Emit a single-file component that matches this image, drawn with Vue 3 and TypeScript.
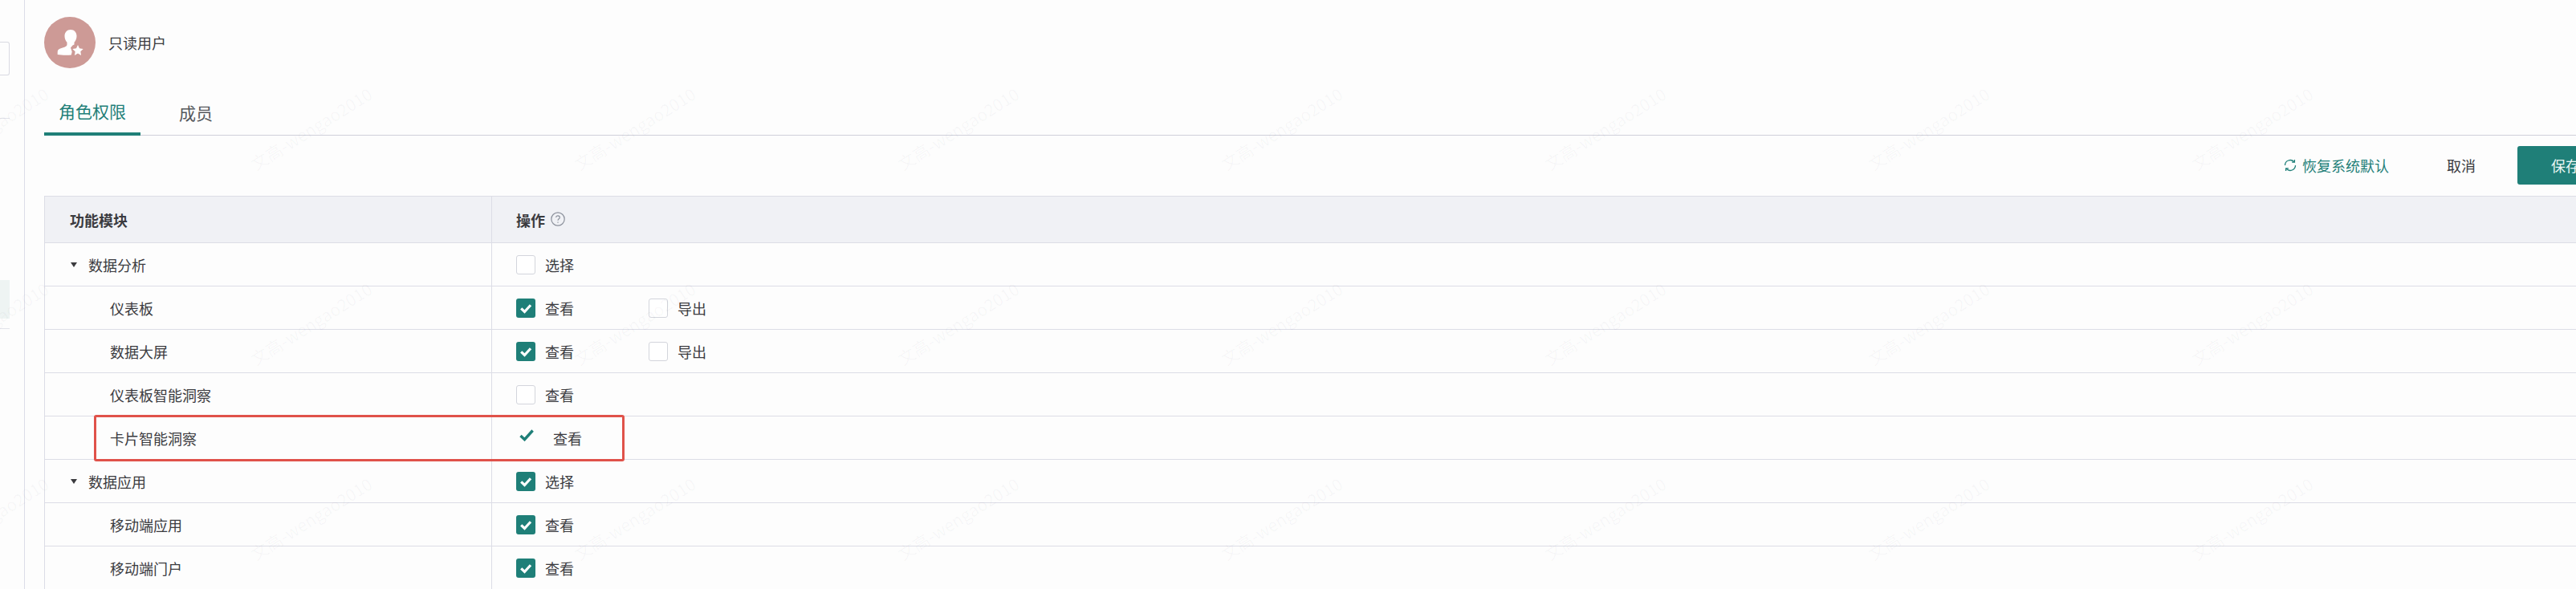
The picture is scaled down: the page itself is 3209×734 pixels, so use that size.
<script setup lang="ts">
type Perm = { label: string; checked?: boolean; bare?: boolean }
type Row = { name: string; group?: boolean; perms: Perm[] }

const rows: Row[] = [
  { name: '数据分析', group: true, perms: [{ label: '选择' }] },
  { name: '仪表板', perms: [{ label: '查看', checked: true }, { label: '导出' }] },
  { name: '数据大屏', perms: [{ label: '查看', checked: true }, { label: '导出' }] },
  { name: '仪表板智能洞察', perms: [{ label: '查看' }] },
  { name: '卡片智能洞察', perms: [{ label: '查看', bare: true }] },
  { name: '数据应用', group: true, perms: [{ label: '选择', checked: true }] },
  { name: '移动端应用', perms: [{ label: '查看', checked: true }] },
  { name: '移动端门户', perms: [{ label: '查看', checked: true }] },
]

const WATERMARKS = 24
</script>

<template>
  <div class="page">
    <aside class="side">
      <div class="side-input"></div>
      <div class="side-line first"></div>
      <div class="side-active"></div>
      <div class="side-line second"></div>
    </aside>

    <main class="main">
      <div class="role">
        <div class="avatar">
          <svg width="64" height="64" viewBox="0 0 64 64" fill="#fff">
            <path d="M33 16c-4.500 0-7.500 3.400-7.500 8 0 3.200 1.200 5.800 3 7.800v3c0 1.200-1 2-2.500 2.600L20 39.600c-2 .8-3.300 2-3.300 4.400v3c5 .9 12 1 17 .5l1-4L33 38.500 35.500 35.500 37.500 34.500V31.800c1.800-2 3-4.600 3-7.800 0-4.600-3-8-7.500-8z" />
            <path d="M42 35l2 4.300 4.700.6-3.400 3.300.8 4.700-4.100-2.300-4.100 2.300.8-4.700-3.400-3.300 4.700-.6z" />
          </svg>
        </div>
        <span class="role-name">只读用户</span>
      </div>

      <div class="tabs">
        <div class="tab active">角色权限</div>
        <div class="tab">成员</div>
      </div>

      <div class="toolbar">
        <a class="restore">
          <svg width="16" height="16" viewBox="0 0 16 16" fill="none" stroke="#1f7f78" stroke-width="1.300">
            <path d="M1.500 8a6.500 6.500 0 0 1 11.300-4.300" />
            <path d="M14.500 8a6.500 6.500 0 0 1-11.300 4.300" />
            <path d="M13.400 .9v3.300h-3.300" />
            <path d="M2.600 15.100v-3.300h3.300" />
          </svg>
          恢复系统默认
        </a>
        <a class="cancel">取消</a>
        <button class="save">保存</button>
      </div>

      <div class="table">
        <div class="row head">
          <div class="col-name">功能模块</div>
          <div class="col-ops">
            操作
            <svg class="help" width="18" height="18" viewBox="0 0 18 18" fill="none" stroke="#8b909b" stroke-width="1.200">
              <circle cx="9" cy="9" r="8.200" />
              <path d="M6.700 7.100c0-1.400 1-2.300 2.300-2.300s2.300.9 2.300 2.100c0 1.900-2.300 1.900-2.300 3.800" />
              <path d="M9 12.500v1.300" />
            </svg>
          </div>
        </div>

        <div v-for="row in rows" :key="row.name" class="row">
          <div class="col-name" :class="{ child: !row.group }">
            <span v-if="row.group" class="caret"></span>
            {{ row.name }}
          </div>
          <div class="col-ops">
            <label v-for="perm in row.perms" :key="perm.label" class="perm">
              <svg v-if="perm.bare" class="bare-tick" width="18" height="15" viewBox="0 0 18 15" fill="none" stroke="#1f7f78" stroke-width="3.400">
                <path d="M1.500 8l5 4.700L16.600 1.500" />
              </svg>
              <span v-else class="box" :class="{ checked: perm.checked }">
                <svg v-if="perm.checked" width="24" height="24" viewBox="0 0 24 24" fill="none" stroke="#fff" stroke-width="3.200">
                  <path d="M6.200 12.300l4.300 4.200 7.500-8.300" />
                </svg>
              </span>
              {{ perm.label }}
            </label>
          </div>
        </div>

        <div class="highlight"></div>
      </div>
    </main>

    <div class="watermarks">
      <span v-for="n in WATERMARKS" :key="n" class="mark">文高-wengao2010</span>
    </div>
  </div>
</template>

<style>
html,
body {
  background: #fdfdfd;
}
</style>

<style scoped>
.page {
  position: relative;
  display: flex;
  width: 3209px;
  height: 734px;
  overflow: hidden;
  background: #fdfdfd;
  color: #3b3b3f;
  font-family: 'Noto Sans CJK SC', 'Liberation Sans', sans-serif;
  font-size: 18px;
  line-height: 24px;
}

.side {
  flex: none;
  width: 30px;
  padding-top: 52px;
  border-right: 1px solid #dcdde8;
}

.side-input {
  width: 12px;
  height: 42px;
  border: 1px solid #d9dae2;
  border-left: 0;
  border-radius: 0 3px 3px 0;
  box-sizing: border-box;
}

.side-line {
  width: 12px;
  height: 1px;
  background: #e2e3ea;
}

.side-line.first {
  margin-top: 53px;
}

.side-active {
  width: 12px;
  height: 48px;
  margin-top: 201px;
  background: #eef4f3;
}

.side-line.second {
  margin-top: 12px;
}

.main {
  flex: none;
  width: 3225px;
  padding-left: 24px;
  box-sizing: border-box;
}

.role {
  display: flex;
  align-items: center;
  gap: 16px;
  padding-top: 21px;
}

.avatar {
  width: 64px;
  height: 64px;
  border-radius: 50%;
  background: #cd9a96;
}

.avatar svg {
  display: block;
}

.role-name {
  color: #3b3b3f;
}

.tabs {
  display: flex;
  height: 56px;
  margin-top: 27px;
  border-bottom: 1px solid #cfd0da;
}

.tab {
  display: flex;
  align-items: center;
  justify-content: center;
  height: 55px;
  padding: 0 18px;
  font-size: 21px;
  color: #55585c;
  box-sizing: border-box;
}

.tab.active {
  width: 120px;
  height: 57px;
  padding: 0 0 1px;
  color: #1f7f78;
  border-bottom: 4px solid #1f7f78;
}

.tab:not(.active) {
  margin-left: 30px;
}

.toolbar {
  display: flex;
  align-items: center;
  justify-content: flex-end;
  height: 48px;
  padding: 13px 0 14px;
}

.restore {
  display: flex;
  align-items: center;
  gap: 7px;
  color: #1f7f78;
}

.cancel {
  margin-left: 72px;
}

.save {
  width: 120px;
  height: 48px;
  margin-left: 52px;
  border: 0;
  border-radius: 3px;
  background: #1f7f78;
  color: #e9f6f4;
  font: inherit;
}

.table {
  position: relative;
  border-top: 1px solid #dcdde6;
  border-left: 1px solid #dcdde6;
}

.row {
  display: flex;
  height: 54px;
  border-bottom: 1px solid #dcdde6;
  box-sizing: border-box;
}

.row.head {
  height: 58px;
  background: #f0f1f5;
  font-weight: 700;
}

.row.head .col-name {
  padding-left: 31px;
}

.col-name {
  display: flex;
  align-items: center;
  flex: none;
  width: 557px;
  padding-left: 30px;
  border-right: 1px solid #dcdde6;
  box-sizing: border-box;
}

.col-name.child {
  padding-left: 81px;
}

.caret {
  width: 0;
  height: 0;
  margin: 0 14px 0 2px;
  border-style: solid;
  border-width: 6px 4.500px 0;
  border-color: #3b3b3f transparent transparent;
}

.col-ops {
  display: flex;
  align-items: center;
  flex: 1;
  padding-left: 30px;
}

.help {
  margin: -2px 0 0 7px;
}

.perm {
  display: flex;
  align-items: center;
  width: 165px;
}

.box {
  flex: none;
  width: 24px;
  height: 24px;
  margin-right: 12px;
  border: 1px solid #d3d5dc;
  border-radius: 3px;
  background: #fff;
  box-sizing: border-box;
}

.box.checked {
  border: 0;
  background: #1f7f78;
}

.box svg {
  display: block;
}

.bare-tick {
  flex: none;
  margin: -6px 24px 0 4px;
}

.highlight {
  position: absolute;
  left: 61px;
  top: 272px;
  width: 661px;
  height: 58px;
  border: 3px solid #e0524a;
  border-radius: 3px;
  box-sizing: border-box;
}

.watermarks {
  position: absolute;
  inset: 0;
  display: grid;
  grid-template-columns: repeat(8, 403px);
  grid-auto-rows: 243px;
  pointer-events: none;
}

.mark {
  justify-self: start;
  align-self: start;
  margin: 145px 0 0 -102px;
  transform: rotate(-32deg);
  color: rgba(60, 60, 70, 0.035);
  font-size: 21px;
  line-height: 30px;
  white-space: nowrap;
}
</style>
